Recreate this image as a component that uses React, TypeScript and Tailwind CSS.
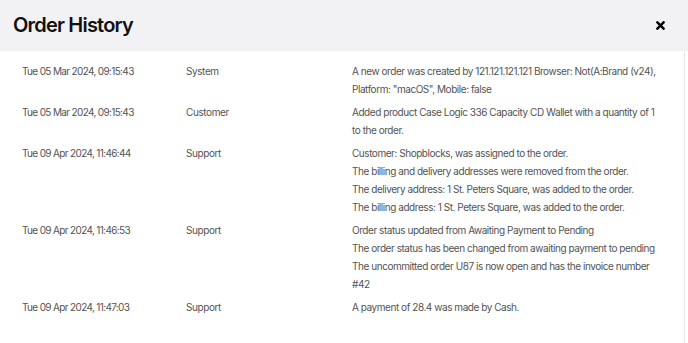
import { FaTimes } from "react-icons/fa"

// each inner array is one paragraph, broken into the lines as shown
const entries = [
  {
    date: "Tue 05 Mar 2024, 09:15:43",
    user: "System",
    lines: [
      [
        "A new order was created by 121.121.121.121 Browser: Not(A:Brand (v24),",
        'Platform: "macOS", Mobile: false',
      ],
    ],
  },
  {
    date: "Tue 05 Mar 2024, 09:15:43",
    user: "Customer",
    lines: [["Added product Case Logic 336 Capacity CD Wallet with a quantity of 1", "to the order."]],
  },
  {
    date: "Tue 09 Apr 2024, 11:46:44",
    user: "Support",
    lines: [
      ["Customer: Shopblocks, was assigned to the order."],
      ["The billing and delivery addresses were removed from the order."],
      ["The delivery address: 1 St. Peters Square, was added to the order."],
      ["The billing address: 1 St. Peters Square, was added to the order."],
    ],
  },
  {
    date: "Tue 09 Apr 2024, 11:46:53",
    user: "Support",
    lines: [
      ["Order status updated from Awaiting Payment to Pending"],
      ["The order status has been changed from awaiting payment to pending"],
      ["The uncommitted order U87 is now open and has the invoice number", "#42"],
    ],
  },
  {
    date: "Tue 09 Apr 2024, 11:47:03",
    user: "Support",
    lines: [["A payment of 28.4 was made by Cash."]],
  },
]

export default function App() {
  return (
    <div className="w-[688px] h-[343px] bg-white flex flex-col overflow-hidden font-['Inter',sans-serif]">
      <div className="h-[51px] shrink-0 bg-[#f2f2f4] flex items-center justify-between pl-[13px] pr-[21px]">
        <h1 className="text-[20px] font-semibold text-[#111] tracking-[-0.8px] pb-[1px]">Order History</h1>
        <button className="text-black">
          <FaTimes className="h-[13px] w-[13px]" />
        </button>
      </div>
      <div className="flex flex-1">
        <div className="flex-1 pt-[8.5px] pl-[22px]">
          {entries.map((entry, i) => (
            <div
              key={i}
              className="grid grid-cols-[164px_166px_1fr] py-[2.5px] text-[10px] leading-[18px] text-[#535353]"
            >
              <div className="tracking-[-0.65px]">{entry.date}</div>
              <div className="tracking-[-0.4px]">{entry.user}</div>
              <div className="tracking-[-0.45px] whitespace-nowrap">
                {entry.lines.map((para, j) => (
                  <p key={j}>
                    {para.map((line, k) => (
                      <span key={k} className="block">
                        {line}
                      </span>
                    ))}
                  </p>
                ))}
              </div>
            </div>
          ))}
        </div>
        <div className="w-[4px] border-l border-[#e6e6e6]" />
      </div>
    </div>
  )
}
